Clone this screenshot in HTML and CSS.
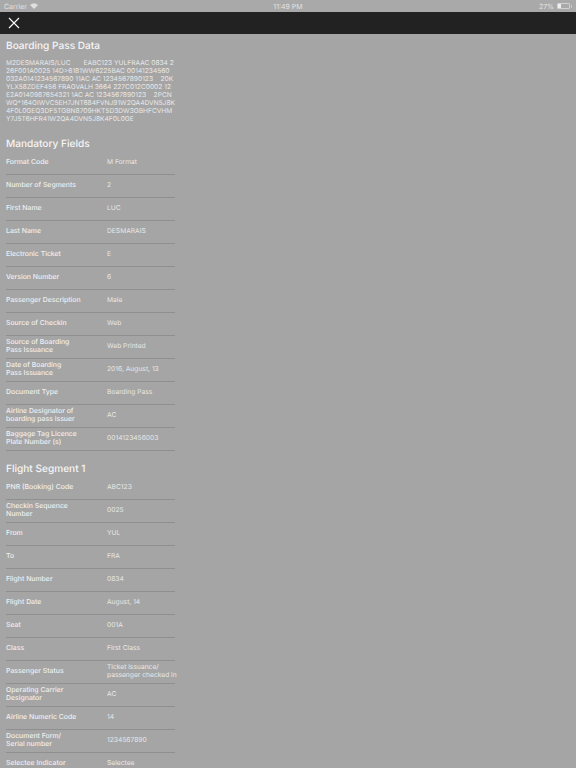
FILE: index.html
```html
<!DOCTYPE html>
<html lang="en">
<head>
<meta charset="utf-8">
<title>Boarding Pass Data</title>
<link rel="stylesheet" href="styles.css">
</head>
<body>
<div class="status">
  <div class="status-left"><span>Carrier</span>
    <svg class="wifi" width="8" height="6" viewBox="0 0 16 12"><path d="M8 12 0 4Q8-3 16 4Z" fill="#e0e0e0"/></svg>
  </div>
  <div class="status-time">11:49 PM</div>
  <div class="status-right"><span>27%</span>
    <span class="battery"><span class="battery-fill"></span></span><span class="battery-tip"></span>
  </div>
</div>
<header class="nav">
  <svg width="12" height="12" viewBox="0 0 12 12"><path d="M1 1 11 11M11 1 1 11" stroke="#fff" stroke-width="1.1" fill="none"/></svg>
</header>
<main class="content">
  <h2 class="title first">Boarding Pass Data</h2>
  <p class="raw">M2DESMARAIS/LUC&nbsp;&nbsp;&nbsp;&nbsp;&nbsp;&nbsp;&nbsp;EABC123 YULFRAAC 0834 2<br>26F001A0025 14D&gt;6181WW6225BAC 00141234560<br>032A0141234567890 11AC AC 1234567890123&nbsp;&nbsp;&nbsp;&nbsp;20K<br>YLX58ZDEF456 FRAGVALH 3664 227C012C0002 12<br>E2A0140987654321 1AC AC 1234567890123&nbsp;&nbsp;&nbsp;&nbsp;2PCN<br>WQ*164GIWVC5EH7JNT684FVNJ91W2QA4DVN5J8K<br>4F0L0GEQ3DF5TGBN8709HKT5D3DW3GBHFCVHM<br>Y7J5T6HFR41W2QA4DVN5J8K4F0L0GE</p>

  <h2 class="title mandatory">Mandatory Fields</h2>
  <div class="rows">
    <div class="row"><div class="k">Format Code</div><div class="v">M Format</div></div>
    <div class="row"><div class="k">Number of Segments</div><div class="v">2</div></div>
    <div class="row"><div class="k">First Name</div><div class="v">LUC</div></div>
    <div class="row"><div class="k">Last Name</div><div class="v">DESMARAIS</div></div>
    <div class="row"><div class="k">Electronic Ticket</div><div class="v">E</div></div>
    <div class="row"><div class="k">Version Number</div><div class="v">6</div></div>
    <div class="row"><div class="k">Passenger Description</div><div class="v">Male</div></div>
    <div class="row"><div class="k">Source of Checkin</div><div class="v">Web</div></div>
    <div class="row"><div class="k">Source of Boarding<br>Pass Issuance</div><div class="v">Web Printed</div></div>
    <div class="row"><div class="k">Date of Boarding<br>Pass Issuance</div><div class="v">2016, August, 13</div></div>
    <div class="row"><div class="k">Document Type</div><div class="v">Boarding Pass</div></div>
    <div class="row"><div class="k">Airline Designator of<br>boarding pass issuer</div><div class="v">AC</div></div>
    <div class="row"><div class="k">Baggage Tag Licence<br>Plate Number (s)</div><div class="v">0014123456003</div></div>
  </div>

  <h2 class="title segment">Flight Segment 1</h2>
  <div class="rows">
    <div class="row"><div class="k">PNR (Booking) Code</div><div class="v">ABC123</div></div>
    <div class="row"><div class="k">Checkin Sequence<br>Number</div><div class="v">0025</div></div>
    <div class="row"><div class="k">From</div><div class="v">YUL</div></div>
    <div class="row"><div class="k">To</div><div class="v">FRA</div></div>
    <div class="row"><div class="k">Flight Number</div><div class="v">0834</div></div>
    <div class="row"><div class="k">Flight Date</div><div class="v">August, 14</div></div>
    <div class="row"><div class="k">Seat</div><div class="v">001A</div></div>
    <div class="row"><div class="k">Class</div><div class="v">First Class</div></div>
    <div class="row"><div class="k">Passenger Status</div><div class="v">Ticket issuance/<br>passenger checked in</div></div>
    <div class="row"><div class="k">Operating Carrier<br>Designator</div><div class="v">AC</div></div>
    <div class="row"><div class="k">Airline Numeric Code</div><div class="v">14</div></div>
    <div class="row"><div class="k">Document Form/<br>Serial number</div><div class="v">1234567890</div></div>
    <div class="row"><div class="k">Selectee Indicator</div><div class="v">Selectee</div></div>
  </div>
</main>
</body>
</html>
```
FILE: styles.css
```css
* { box-sizing: border-box; }
html, body { margin: 0; height: 768px; overflow: hidden; }
body { background: #a5a5a5; font-family: Inter, "Liberation Sans", sans-serif; color: #e6e6e6; text-rendering: geometricPrecision; }
.status { height: 12px; background: #a9a9a9; display: flex; align-items: center; justify-content: space-between; padding: 0 4px; font-size: 7px; color: #e2e2e2; position: relative; }
.status-left, .status-right { display: flex; align-items: center; gap: 3px; }
.status-time { position: absolute; left: 0; right: 0; text-align: center; }
.battery { width: 13px; height: 6px; border: 1px solid #d0d0d0; border-radius: 1px; padding: 0; display: block; margin-right: -2px; }
.battery-fill { display: block; width: 3px; height: 4px; background: #f0f0f0; }
.battery-tip { width: 1px; height: 3px; background: #c8c8c8; }
.nav { height: 22px; background: #222; padding: 0 8px; display: flex; align-items: center; }
.content { padding: 0 0 0 6px; }
.title { margin: 0; font-size: 10.1px; font-weight: 500; color: #f6f6f6; line-height: 14px; }
.first { margin-top: 5px; }
.raw { margin: 6px 0 0; font-size: 6.65px; line-height: 8px; color: #e8e8e8; white-space: nowrap; }
.mandatory { margin-top: 14px; }
.rows { width: 169px; margin-top: 1px; }
.row { height: 23px; display: flex; align-items: center; padding-bottom: 2px; border-bottom: 1px solid #8f8f8f; font-size: 6.9px; line-height: 8px; }
.k { width: 101px; flex: none; font-weight: 500; color: #f0f0f0; }
.v { font-size: 6.7px; white-space: nowrap; color: #e8e8e8; }
.segment { margin-top: 11px; margin-bottom: 1px; }
```
